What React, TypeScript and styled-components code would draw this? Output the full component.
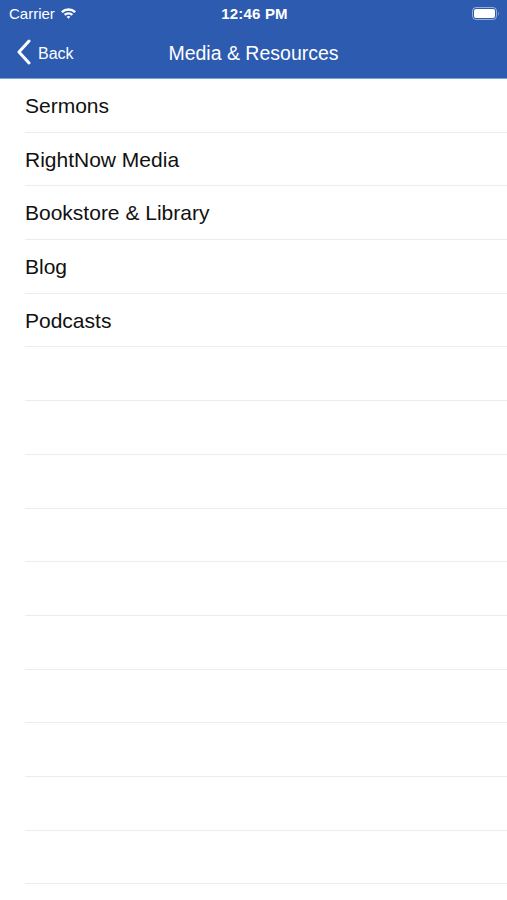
import React from "react";
import styled, { createGlobalStyle } from "styled-components";

const Global = createGlobalStyle`
  html, body { margin: 0; padding: 0; background: #ffffff; }
  body { font-family: "Liberation Sans", Arial, sans-serif; }
`;

const Screen = styled.div`
  width: 507px;
  height: 900px;
  overflow: hidden;
  background: #ffffff;
  display: flex;
  flex-direction: column;
`;

const Header = styled.header`
  background: #2d5bb0;
  color: #ffffff;
  border-bottom: 1px solid #7fa2dc;
  height: 78px;
  display: flex;
  flex-direction: column;
`;

const StatusBar = styled.div`
  height: 27px;
  display: grid;
  grid-template-columns: 1fr auto 1fr;
  align-items: center;
  padding: 0 7px 0 9px;
  font-size: 15px;
`;

const Carrier = styled.div`
  display: flex;
  align-items: center;
  gap: 5px;
`;

const Time = styled.div`
  font-weight: 700;
  font-size: 15px;
  letter-spacing: 0.2px;
`;

const BatteryWrap = styled.div`
  justify-self: end;
  display: flex;
  align-items: center;
`;

const NavBar = styled.div`
  flex: 1;
  position: relative;
  display: flex;
  align-items: center;
  justify-content: center;
`;

const BackButton = styled.div`
  position: absolute;
  left: 16px;
  top: 12px;
  display: flex;
  align-items: center;
  gap: 6px;
  font-size: 16px;
`;

const BackLabel = styled.span`
  margin-top: 3px;
`;

const Title = styled.div`
  font-size: 19.5px;
  margin-top: 2px;
`;

const List = styled.div`
  display: flex;
  flex-direction: column;
`;

const Row = styled.div`
  height: 53.7px;
  box-sizing: border-box;
  margin-left: 25px;
  padding-top: 1px;
  border-bottom: 1px solid #ececec;
  display: flex;
  align-items: center;
  font-size: 21px;
  color: #111111;
`;

const items = ["Sermons", "RightNow Media", "Bookstore & Library", "Blog", "Podcasts"];
const rows = Array.from({ length: 15 }, (_, i) => items[i] ?? "");

export default function App() {
  return (
    <>
      <Global />
      <Screen>
        <Header>
          <StatusBar>
            <Carrier>
              <span>Carrier</span>
              <svg width="17" height="13" viewBox="0 0 17 13">
                <path d="M1 4.2 A11 11 0 0 1 16 4.2 L14.3 5.9 A8.6 8.6 0 0 0 2.7 5.9 Z" fill="#fff" />
                <path d="M3.8 7 A7 7 0 0 1 13.2 7 L11.5 8.7 A4.6 4.6 0 0 0 5.5 8.7 Z" fill="#fff" />
                <path d="M6.6 9.8 A3 3 0 0 1 10.4 9.8 L8.5 11.8 Z" fill="#fff" />
              </svg>
            </Carrier>
            <Time>12:46 PM</Time>
            <BatteryWrap>
              <svg width="28" height="13" viewBox="0 0 28 13">
                <rect x="0.5" y="0.5" width="24" height="12" rx="3.5" fill="none" stroke="rgba(255,255,255,0.5)" />
                <rect x="2" y="2" width="21" height="9" rx="2" fill="#fff" />
                <path d="M26 4.5 Q27.5 6.5 26 8.5 Z" fill="rgba(255,255,255,0.5)" />
              </svg>
            </BatteryWrap>
          </StatusBar>
          <NavBar>
            <BackButton>
              <svg width="16" height="26" viewBox="0 0 16 26">
                <path d="M13 2 L3 13 L13 24" fill="none" stroke="#fff" strokeWidth="3" strokeLinecap="round" strokeLinejoin="round" />
              </svg>
              <BackLabel>Back</BackLabel>
            </BackButton>
            <Title>Media &amp; Resources</Title>
          </NavBar>
        </Header>
        <List>
          {rows.map((label, i) => (
            <Row key={i}>{label}</Row>
          ))}
        </List>
      </Screen>
    </>
  );
}
